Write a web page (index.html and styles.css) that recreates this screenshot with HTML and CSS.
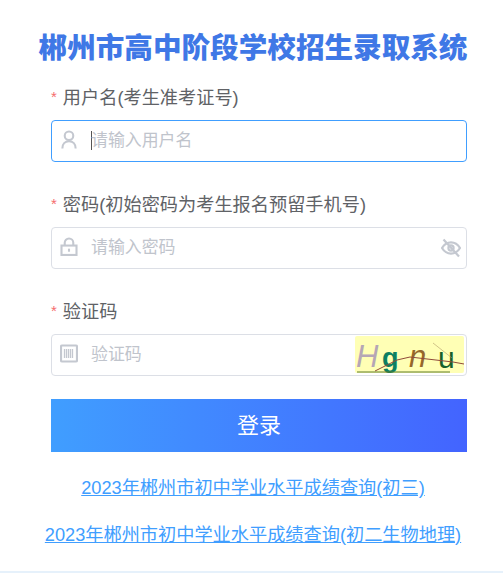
FILE: index.html
```html
<!DOCTYPE html>
<html lang="zh">
<head>
<meta charset="utf-8">
<title>郴州市高中阶段学校招生录取系统</title>
<link rel="stylesheet" href="styles.css">
</head>
<body>
<main class="page">
  <h1 class="title">郴州市高中阶段学校招生录取系统</h1>
  <form class="form">
    <div class="field">
      <label class="label"><span class="star">*</span>用户名(考生准考证号)</label>
      <div class="input focused">
        <svg class="icon" viewBox="0 0 18 20" fill="none" stroke="#c4c8d0" stroke-width="2.200"><circle cx="9" cy="6" r="4.500"/><path d="M2 19.500c0-4.600 2.800-7.600 7-7.600s7 3 7 7.600"/></svg>
        <span class="caret"></span><span class="ph">请输入用户名</span>
      </div>
    </div>
    <div class="field">
      <label class="label"><span class="star">*</span>密码(初始密码为考生报名预留手机号)</label>
      <div class="input">
        <svg class="icon" viewBox="0 0 18 20" fill="none" stroke="#c4c8d0" stroke-width="2.200"><path d="M4.500 9V6a4.500 4.500 0 0 1 9 0v3"/><rect x="1.100" y="9" width="15.800" height="9.900"/><path d="M9 12.300v3.200"/></svg>
        <span class="ph">请输入密码</span>
        <svg class="eye" viewBox="0 0 20 20" fill="none" stroke="#c4c8d0" stroke-width="2.200"><path d="M1 10c2.200-3.600 5.200-5.600 9-5.600s6.800 2 9 5.600c-2.200 3.600-5.200 5.600-9 5.600S3.200 13.600 1 10z"/><circle cx="10" cy="10" r="2.600"/><path d="M2.500 1.500l15.500 17"/></svg>
      </div>
    </div>
    <div class="field">
      <label class="label"><span class="star">*</span>验证码</label>
      <div class="input">
        <svg class="icon" viewBox="0 0 18 18" fill="none" stroke="#c4c8d0"><rect x="1" y="1" width="16" height="16" rx="1" stroke-width="2.200"/><path d="M4.500 4.500v9M6.500 4.500v9M8.500 4.500v9M10.500 4.500v9M12.500 4.500v9" stroke-width="1.300"/></svg>
        <span class="ph">验证码</span>
        <div class="captcha">
          <span class="c1">H</span><span class="c2">g</span><span class="c3">n</span><span class="c4">u</span>
          <svg class="noise" viewBox="0 0 109 37" fill="none"><path d="M20 35 42 24 55 21 98 26 109 28" stroke="#8f4a3a"/><path d="M2 36H95" stroke="#5d7a2a"/><path d="M78 7 97 22" stroke="#b09a6a" stroke-width=".6"/></svg>
        </div>
      </div>
    </div>
    <button class="submit" type="button">登录</button>
  </form>
  <nav class="links">
    <a href="#">2023年郴州市初中学业水平成绩查询(初三)</a>
    <a href="#">2023年郴州市初中学业水平成绩查询(初二生物地理)</a>
  </nav>
</main>
<div class="strip"></div>
</body>
</html>
```
FILE: styles.css
```css
* { box-sizing: border-box; }
html, body { margin: 0; height: 573px; overflow: hidden; background: #fff; }
body {
  display: flex;
  flex-direction: column;
  justify-content: space-between;
  font-family: "Liberation Sans", "Noto Sans CJK SC", sans-serif;
}
.page { display: flex; flex-direction: column; padding: 28px 36px 0 51px; }
.title {
  margin: 0 -6px 0 -18px;
  font-family: "Noto Sans CJK SC", sans-serif;
  font-size: 28.600px;
  line-height: 36px;
  font-weight: 900;
  text-align: center;
  white-space: nowrap;
  color: #3f78e6;
}
.form { display: flex; flex-direction: column; margin-top: 19px; }
.field { display: flex; flex-direction: column; margin-bottom: 23.400px; }
.field + .field { margin-top: 5px; }
.label { height: 37px; font-size: 18.200px; line-height: 28px; color: #606266; white-space: nowrap; }
.star { color: #f56c6c; margin-right: 6px; font-size: 15px; vertical-align: 2px; }
.input {
  display: flex;
  align-items: center;
  position: relative;
  height: 41.600px;
  padding: 0 8px;
  border: 1px solid #dcdfe6;
  border-radius: 4px;
  background: #fff;
}
.input.focused { border-color: #409eff; }
.icon { width: 18px; height: 19px; flex: none; margin: 0 13px 2px 0; }
.ph { font-size: 16.900px; color: #c0c4cc; white-space: nowrap; padding-bottom: 4px; }
.caret { width: 1px; height: 19px; background: #555; margin-right: -1px; flex: none; }
.eye { position: absolute; right: 5px; top: 10px; width: 20px; height: 20px; }
.captcha {
  position: absolute;
  right: 2px;
  top: 1px;
  width: 109px;
  height: 37px;
  background: #ffffb5;
  border-radius: 2px;
  overflow: hidden;
}
.captcha span { position: absolute; font-family: "Liberation Sans", sans-serif; line-height: 30px; }
.c1 { left: 1px; top: 6px; font-size: 31px; font-style: italic; color: #b5a6b5; }
.c2 { left: 27px; top: 7px; font-size: 27px; font-weight: 700; color: #0c7f62; }
.c3 { left: 54px; top: 6px; font-size: 31px; font-style: italic; color: #96672a; }
.c4 { left: 83px; top: 7px; font-size: 30px; color: #17602a; }
.noise { position: absolute; inset: 0; width: 109px; height: 37px; }
.submit {
  height: 53px;
  padding: 0 0 5px;
  border: 0;
  font-family: inherit;
  font-size: 22px;
  color: #fff;
  background: linear-gradient(90deg, #409eff, #4364ff);
}
.links { display: flex; flex-direction: column; align-items: center; gap: 24px; margin: 25px 12px 0 0; }
.links a { font-size: 18.200px; line-height: 23px; color: #409eff; white-space: nowrap; text-decoration: underline; }
.strip { height: 2px; background: #e6f1fb; flex: none; }
```
